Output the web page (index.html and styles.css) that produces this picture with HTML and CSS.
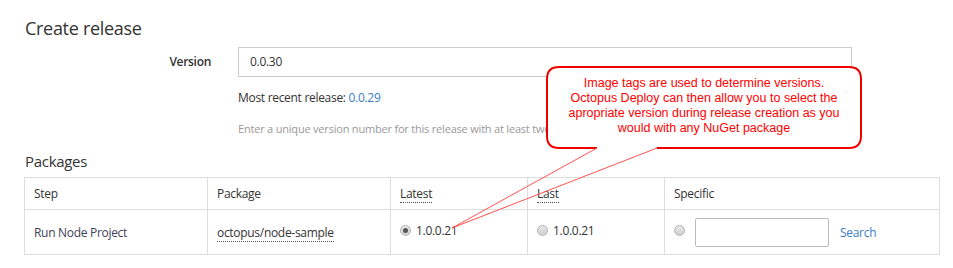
FILE: index.html
```html
<!DOCTYPE html>
<html>
<head>
<meta charset="utf-8">
<link rel="stylesheet" href="styles.css">
</head>
<body>
<div class="page">
  <h1 class="title">Create release</h1>
  <div class="form-row">
    <label class="form-label">Version</label>
    <div class="form-field">
      <div class="text-input">0.0.30</div>
      <div class="recent">Most recent release: <a class="link">0.0.29</a></div>
      <div class="help">Enter a unique version number for this release with at least two parts.</div>
    </div>
  </div>
  <h2 class="subtitle">Packages</h2>
  <table class="packages">
    <colgroup>
      <col class="w-step">
      <col class="w-pkg">
      <col class="w-latest">
      <col class="w-last">
      <col class="w-spec">
    </colgroup>
    <thead>
      <tr>
        <th>Step</th>
        <th>Package</th>
        <th><span class="dotted">Latest</span></th>
        <th><span class="dotted">Last</span></th>
        <th>Specific</th>
      </tr>
    </thead>
    <tbody>
      <tr>
        <td class="step">Run Node Project</td>
        <td><span class="dotted">octopus/node-sample</span></td>
        <td><span class="radio-wrap"><span class="radio checked"></span><span class="ver">1.0.0.21</span></span></td>
        <td><span class="radio-wrap"><span class="radio"></span><span class="ver">1.0.0.21</span></span></td>
        <td><span class="spec-wrap"><span class="radio"></span><span class="spec-input"></span><a class="link search">Search</a></span></td>
      </tr>
    </tbody>
  </table>
</div>
<svg class="callout-shape" width="953" height="268" viewBox="0 0 953 268">
  <path d="M597 148 L559 148 Q547 148 547 136 L547 79 Q547 67 559 67 L849 67 Q861 67 861 79 L861 136 Q861 148 849 148 L657 148" fill="#fff" stroke="#ee0000" stroke-width="2"/>
  <path d="M597 148 L452 228 L657 148" fill="none" stroke="#ff5050" stroke-width="1"/>
</svg>
<div class="callout-text">Image tags are used to determine versions.<br>Octopus Deploy can then allow you to select the<br>apropriate version during release creation as you<br>would with any NuGet package</div>
</body>
</html>
```
FILE: styles.css
```css
html, body {
  margin: 0;
  padding: 0;
  background: #fff;
}
body {
  font-family: "Open Sans", "Noto Sans", sans-serif;
  color: #333;
  font-size: 12px;
  position: relative;
  width: 953px;
  height: 268px;
  overflow: hidden;
}
.page {
  padding: 15px 15px 0 24px;
}
.title {
  margin: 0 0 0 1px;
  font-size: 18px;
  font-weight: 400;
  line-height: 26px;
  letter-spacing: -0.3px;
}
.form-row {
  display: flex;
  margin-top: 6px;
}
.form-label {
  width: 214px;
  box-sizing: border-box;
  padding-right: 27px;
  text-align: right;
  font-weight: 600;
  line-height: 29px;
  letter-spacing: -0.3px;
}
.form-field {
  display: flex;
  flex-direction: column;
}
.text-input {
  width: 614px;
  height: 30px;
  box-sizing: border-box;
  border: 1px solid #ccc;
  padding: 0 11px;
  line-height: 28px;
  letter-spacing: -0.3px;
}
.recent {
  margin-top: 12px;
  line-height: 17px;
  letter-spacing: -0.3px;
}
.link {
  color: #3a7ec2;
  text-decoration: none;
}
.help {
  margin-top: 15px;
  color: #999;
  font-size: 11px;
  line-height: 15px;
  letter-spacing: -0.2px;
}
.subtitle {
  margin: 14px 0 0 1px;
  font-size: 15px;
  font-weight: 400;
  line-height: 22px;
  letter-spacing: -0.3px;
}
.packages {
  margin-top: 5px;
  border-collapse: collapse;
  table-layout: fixed;
  width: 915px;
  letter-spacing: -0.3px;
}
.w-step, .w-pkg { width: 183px; }
.w-latest, .w-last { width: 137px; }
.w-spec { width: 275px; }
.packages th, .packages td {
  border: 1px solid #ddd;
  text-align: left;
  padding: 0 0 0 9px;
}
.packages th {
  font-weight: 400;
  height: 31px;
}
.packages td {
  height: 44px;
}
.dotted {
  border-bottom: 1px dotted #555;
}
.step { color: #3d4256; }
.radio-wrap, .spec-wrap {
  display: flex;
  align-items: center;
}
.radio-wrap { margin-top: -4px; }
.radio {
  width: 9px;
  height: 9px;
  border-radius: 50%;
  border: 1px solid #b5b5b5;
  background: linear-gradient(#e8e8e8, #cfcfcf);
  position: relative;
  flex: none;
}
.radio.checked::after {
  content: "";
  position: absolute;
  left: 2px;
  top: 2px;
  width: 5px;
  height: 5px;
  border-radius: 50%;
  background: #555;
}
.ver { margin-left: 5px; }
.spec-wrap .radio { margin-top: -4px; }
.spec-input {
  width: 134px;
  height: 29px;
  box-sizing: border-box;
  border: 1px solid #bbb;
  border-radius: 2px;
  margin-left: 10px;
}
.search {
  margin-left: 11px;
}
.callout-shape {
  position: absolute;
  left: 0;
  top: 0;
}
.callout-text {
  position: absolute;
  left: 549px;
  top: 76px;
  width: 310px;
  text-align: center;
  font-family: "Liberation Sans", Arial, sans-serif;
  font-size: 12.5px;
  line-height: 15px;
  color: #ff0000;
}
```
